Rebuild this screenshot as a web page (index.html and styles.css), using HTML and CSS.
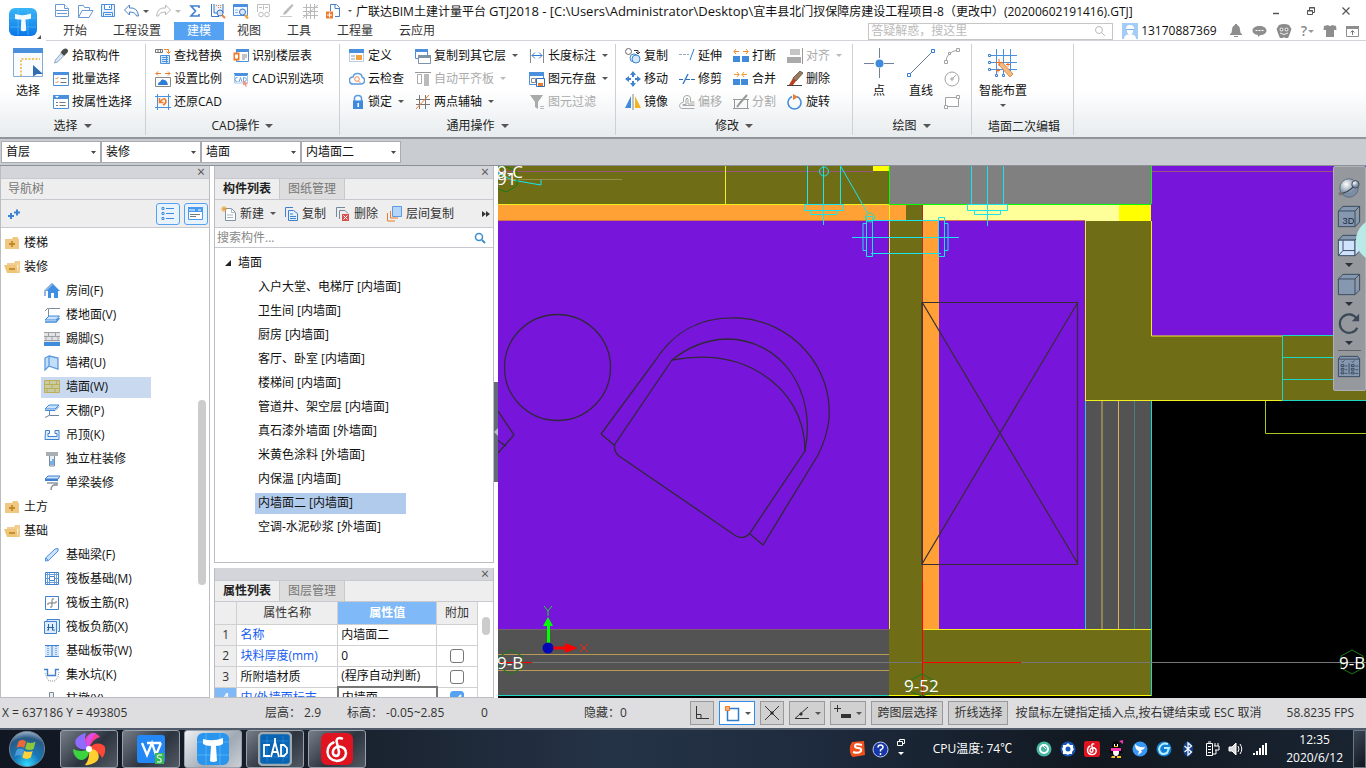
FILE: index.html
```html
<!DOCTYPE html>
<html lang="zh-CN">
<head>
<meta charset="utf-8">
<title>广联达BIM土建计量平台 GTJ2018</title>
<link rel="stylesheet" href="styles.css">
</head>
<body>
<div class="app">

<header class="top">
  <button class="logo" aria-label="应用菜单">
    <svg width="34" height="34" viewBox="0 0 34 34"><defs><linearGradient id="lg" x1="0" y1="0" x2="0" y2="1"><stop offset="0" stop-color="#38b6f7"/><stop offset="1" stop-color="#0a77e8"/></linearGradient></defs><rect x="1" y="2" width="28" height="28" rx="6" fill="url(#lg)"/><path d="M2 12h26M2 21h26M10 3v26M20 3v26" stroke="#5cc0fa" stroke-width=".6"/><path d="M7 8q8 2.500 16-.5v5q-2.500 1-5.500 1l.8 11q-3 1.500-5.500 0l.5-11Q10 13.500 7 13z" fill="#f3fbff"/><path d="M33 29v4h-4z" fill="#555"/></svg>
  </button>
  <div class="top-rows">
    <div class="titlebar">
      <div class="quick">
        <button aria-label="新建"><svg width="16" height="16" viewBox="0 0 16 16" fill="#fff" stroke="#6a9ad6"><path d="M1.500 7V1.500h9l4 4V7M1.500 7.500h13v6h-13z"/><path d="M10.500 1.500v4h4M3 10.500h10"/></svg></button>
        <button aria-label="打开"><svg width="17" height="16" viewBox="0 0 17 16" fill="#fff" stroke="#6a9ad6"><path d="M1.500 14.500v-12h5l1 2h5v3"/><path d="M1.500 14.500l3.500-7h11l-4 7z"/></svg></button>
        <button aria-label="保存"><svg width="16" height="16" viewBox="0 0 16 16" fill="#eaf3fd" stroke="#4a90dc"><path d="M1.500 1.500h13v12h-13zM4.500 1.500v5h7v-5M3.500 13.500v-4h9v4"/><path d="M5 11.500h6M9.500 3v2"/></svg></button>
        <button class="with-caret" aria-label="撤销"><svg width="17" height="16" viewBox="0 0 17 16" fill="#fff" stroke="#4a80c4"><path d="M1.500 7l5-5v3q8-1 9 8h-2q-1-4-7-4v3z"/></svg><i class="caret"></i></button>
        <button class="with-caret pale" aria-label="重做"><svg width="17" height="16" viewBox="0 0 17 16" fill="#fff" stroke="#b8b8b8"><path d="M15.500 7l-5-5v3q-8-1-9 8h2q1-4 7-4v3z"/></svg><i class="caret"></i></button>
        <button aria-label="汇总计算"><svg width="16" height="16" viewBox="0 0 16 16"><path d="M12 5V3H4l4.500 5L4 13h8v-2" fill="none" stroke="#3f7fd0" stroke-width="1.600"/></svg></button>
        <button aria-label="查看工程量"><svg width="17" height="17" viewBox="0 0 17 17"><path d="M1.500 1v12.500H9" fill="none" stroke="#3f74bf"/><path d="M4 1v9h9V1" fill="#eaf3fd" stroke="#3f74bf"/><path d="M6 2h1v1H6zM8 2h1v1H8zM10 2h1v1h-1zM8 4h1v1H8zM10 4h1v1h-1z" fill="#e8833a"/><circle cx="10" cy="10" r="3" fill="#cfe3fa" stroke="#3f74bf"/><path d="M12 12l3 3" stroke="#e8833a" stroke-width="2"/></svg></button>
        <button aria-label="查找"><svg width="17" height="17" viewBox="0 0 17 17"><path d="M.5 1.500h14v11H.5z" fill="#f4f9ff" stroke="#4a90dc"/><path d="M.5 1h14v3H.5z" fill="#4a90dc"/><path d="M2 7h3M2 9.500h3" stroke="#8cb8ea"/><circle cx="9.500" cy="9" r="3" fill="#d9e9fb" stroke="#3f74bf"/><path d="M12 12l3 3.500" stroke="#f0a030" stroke-width="2.200"/></svg></button>
        <button aria-label="检查"><svg width="16" height="16" viewBox="0 0 16 16" fill="none" stroke="#bdbdbd"><path d="M1.500 9V1.500h12V9M3 4.500h3M9 4.500h3M7.500 2.500v4" /><circle cx="5" cy="11.500" r="2.300"/><circle cx="11" cy="11.500" r="2.300"/></svg></button>
        <button aria-label="画笔"><svg width="16" height="16" viewBox="0 0 16 16"><path d="M13 1l1.500 1.500L7 11l-3 1 1-3z" fill="#bbb"/><path d="M1 13.500h12" stroke="#ccc"/></svg></button>
        <button aria-label="网格"><svg width="17" height="17" viewBox="0 0 17 17" stroke="#b9b9b9"><path d="M4.500 1v15M8.500 1v15M12.500 1v15M1 4.500h15M1 8.500h15M1 12.500h15M1 15L16 2"/></svg></button>
        <button aria-label="导入"><svg width="17" height="17" viewBox="0 0 17 17"><path d="M5.500 8V1.500h6l3 3v9H10M10 1.500v4h4" fill="#fff" stroke="#4a80c4"/><path d="M1 8.500h7v7H1z" fill="#ee7a2b"/><path d="M2 12h5M4.500 9.500v5" stroke="#fff"/></svg></button>
        <button class="tiny" aria-label="自定义快速访问工具栏"><i class="caret"></i></button>
      </div>
      <h1>广联达BIM土建计量平台 <span class="path">GTJ2018 - [C:\Users\Administrator\Desktop\</span>宜丰县北门扠保障房建设工程项目-8（更改中）(20200602191416).GTJ]</h1>
      <div class="window-buttons">
        <button aria-label="最小化"><svg width="10" height="10" viewBox="0 0 10 10"><path d="M2 7.500h6" stroke="#555" stroke-width="1.500"/></svg></button>
        <button aria-label="还原"><svg width="10" height="10" viewBox="0 0 10 10" fill="none" stroke="#555"><path d="M3.500 4V1.500h5v5H6M1.500 4.500h5v4h-5zM3 2h6M1 5h6"/></svg></button>
        <button aria-label="关闭"><svg width="10" height="10" viewBox="0 0 10 10"><path d="M1.500 1.500l7 7M8.500 1.500l-7 7" stroke="#555" stroke-width="1.200"/></svg></button>
      </div>
    </div>
    <div class="tabrow">
      <nav class="tabs">
        <button>开始</button><button>工程设置</button><button class="active">建模</button><button>视图</button><button>工具</button><button>工程量</button><button>云应用</button>
      </nav>
      <div class="account">
        <label class="help-search"><input type="text" placeholder="答疑解惑，搜这里" aria-label="答疑解惑"><svg width="12" height="12" viewBox="0 0 12 12" fill="none" stroke="#bbb"><circle cx="5" cy="5" r="3.500"/><path d="M7.500 7.500L11 11"/></svg></label>
        <a class="user" href="#"><svg width="16" height="16" viewBox="0 0 16 16"><path d="M0 0h16v16H0z" fill="#a4cdf6"/><path d="M2 16q0-4 4-4.500h4q4 .5 4 4.500z" fill="#fff"/><path d="M5 6h6v3q-1 3-3 3t-3-3zM4 6q0-4 4-4t4 4z" fill="#fff"/><path d="M4 6.500h8" stroke="#7fb4ea"/></svg>13170887369</a>
        <button aria-label="通知"><svg width="14" height="16" viewBox="0 0 14 16" fill="#8e8e8e"><path d="M6 1h2v1q3 1 3 5 0 3 2 4v1H1v-1q2-1 2-4 0-4 3-5zM5 13h4v1H5z"/></svg></button>
        <button aria-label="消息"><svg width="15" height="16" viewBox="0 0 15 16"><path d="M7.500 3c4 0 7 2 7 4.500S12 12 8.500 12L6 14v-2C2.500 11.800.5 10 .5 7.500S3.500 3 7.500 3z" fill="#8e8e8e"/><path d="M3.500 7h2v1h-2zM6.500 7h2v1h-2zM9.500 7h2v1h-2z" fill="#fff"/></svg></button>
        <button aria-label="助手"><svg width="16" height="16" viewBox="0 0 16 16"><path d="M3 2q5-2 10 0l2.500 4L13 13l-1 2H9l-1-1-1 1H4l-1-2L.5 6z" fill="#8b8b8b"/><circle cx="5.500" cy="6.500" r="2" fill="#ddd"/><circle cx="10.500" cy="6.500" r="2" fill="#ddd"/><circle cx="5.500" cy="6.500" r=".8" fill="#555"/><circle cx="10.500" cy="6.500" r=".8" fill="#555"/><path d="M4 10q4 3 8 0" stroke="#eee" fill="none"/></svg></button>
        <button class="question" aria-label="帮助">?<i class="caret"></i></button>
        <button aria-label="皮肤"><svg width="14" height="14" viewBox="0 0 14 14"><path d="M1 2l4-1q2 2 4 0l4 1 .5 4H11v7H3V6H.5z" fill="#8e8e8e"/></svg></button>
        <button aria-label="折叠功能区"><svg width="14" height="14" viewBox="0 0 14 14"><path d="M.5 2.500h12v10H.5z" fill="#fff" stroke="#8e8e8e"/><path d="M0 2h13v3H0z" fill="#8e8e8e"/><path d="M6.500 11V7M4.500 8.500l2-2 2 2" stroke="#777" fill="none"/></svg></button>
      </div>
    </div>
  </div>
</header>

<section class="ribbon" aria-label="建模">
  <div class="group g-select">
    <div class="group-body">
      <button class="big"><svg width="30" height="30" viewBox="0 0 30 30"><path d="M.5.5h29v28H.5z" fill="#f8fbff" stroke="#88abd4"/><path d="M0 0h30v5H0z" fill="#4a90dc"/><path d="M8 28V11h19" fill="none" stroke="#f0b428" stroke-width="1.500" stroke-dasharray="2 1.500"/><path d="M20 17l10 9h-6l-4 2.500z" fill="#316db4"/></svg>选择</button>
      <div class="col">
        <button><svg width="16" height="16" viewBox="0 0 16 16"><path d="M10 1.500q3-2 4.500 0t-1 4L11 8 7.500 4.500z" fill="#4a4a4a"/><path d="M8 5.500l2.500 2.500-6 6-3 1 1-3z" fill="#dbe8f5" stroke="#8ba6c0"/></svg>拾取构件</button>
        <button><svg width="16" height="16" viewBox="0 0 16 16"><path d="M.5 1.500h15v13H.5z" fill="#fff" stroke="#4a90dc"/><path d="M0 1h16v3H0z" fill="#4a90dc"/><path d="M2.500 7l1 1 2-2M2.500 11l1 1 2-2" fill="none" stroke="#f08a30"/><path d="M7.500 7.500h6M7.500 11.500h6" stroke="#777"/></svg>批量选择</button>
        <button><svg width="16" height="16" viewBox="0 0 16 16"><path d="M.5 1.500h15v13H.5z" fill="#fff" stroke="#4a90dc"/><path d="M0 1h16v4H0z" fill="#4a90dc"/><path d="M2 2h4L4 4z" fill="#fff"/><path d="M3 8.500h2M3 11.500h2M6.500 8.500h6M6.500 11.500h6" stroke="#777"/></svg>按属性选择</button>
      </div>
    </div>
    <button class="group-label">选择<i class="caret"></i></button>
  </div>
  <div class="group g-cad">
    <div class="group-body">
      <div class="col">
        <button><svg width="16" height="16" viewBox="0 0 16 16"><path d="M.5 1.500h7v3h-7zM3 1.500v3M5.500 1.500v3" fill="#fff" stroke="#777"/><path d="M9 1.500h4.500V5M11.500 3.500l2 2 2-2" fill="none" stroke="#f08a30"/><path d="M5.500 7.500h9v8h-9z" fill="#d8e9fb" stroke="#4a90dc"/><path d="M7 9.500h6M7 11.500h6M7 13.500h6M11.500 8v7" stroke="#4a90dc"/></svg>查找替换</button>
        <button><svg width="16" height="16" viewBox="0 0 16 16"><path d="M1 2.500h5M10 2.500h5M3 .5l-2 2 2 2M13 .5l2 2-2 2" fill="none" stroke="#ee7a2b"/><path d="M.5 6.500h15v9H.5z" fill="#fff" stroke="#888"/><path d="M3 14q0-3 2-3 2-4 4-2 3 0 4 5z" fill="#2f7dd2"/></svg>设置比例</button>
        <button><svg width="16" height="16" viewBox="0 0 16 16" fill="none"><path d="M0 2.500h16M0 13.500h16M2.500 0v16M13.500 0v16" stroke="#4a90dc"/><path d="M5 8q5-6 6-1 0 3-3 4M4.500 4v4.500h4" stroke="#ee7a2b" stroke-width="1.600"/></svg>还原CAD</button>
      </div>
      <div class="col">
        <button><svg width="16" height="16" viewBox="0 0 16 16"><path d="M3.500 1.500h12v12h-12z" fill="#fff" stroke="#4a90dc"/><path d="M3 1h13v3H3z" fill="#4a90dc"/><path d="M9 7h5M9 9h5M9 11h3" stroke="#888"/><path d="M.5 4.500h6v8h-6z" fill="#ee7a2b"/><path d="M2 6.500h3v4H2z" fill="#fff"/></svg>识别楼层表</button>
        <button><svg width="16" height="16" viewBox="0 0 16 16"><path d="M1 2h14v3H1z" fill="#4a90dc"/><path d="M1.500 3v9h13V4" fill="none" stroke="#a8cbee"/><path d="M4.500 6.500Q2 6 2 8.500t2.500 2M6 11l1.500-4.500L9 11M10.500 6.500v4q3 0 3-2t-3-2" fill="none" stroke="#6da4dd"/><path d="M10 9l5 4-2 .5 1 2h-1.500l-1-2-1.500 1z" fill="#ee957f"/></svg>CAD识别选项</button>
      </div>
    </div>
    <button class="group-label">CAD操作<i class="caret"></i></button>
  </div>
  <div class="group g-common">
    <div class="group-body">
      <div class="col">
        <button><svg width="16" height="16" viewBox="0 0 16 16"><path d="M.5 1.500h14v12H.5z" fill="#fff" stroke="#b9cde4"/><path d="M0 1h15v4H0z" fill="#4a90dc"/><path d="M2 7h4v2H2zM2 10h4v2H2z" fill="#c3ccd7"/><path d="M7 7h6v5H7z" fill="#f4a03c"/></svg>定义</button>
        <button><svg width="16" height="16" viewBox="0 0 16 16" fill="none"><path d="M4 13Q.5 13 .5 9.500T4 6q1-4 5-3.500T13 6q3 1 2.500 4T12 13z" stroke="#5b9be0" stroke-width="1.400"/><circle cx="8" cy="8" r="2.300" stroke="#ee8a4b"/><path d="M9.500 10l2 2" stroke="#ee8a4b"/></svg>云检查</button>
        <button><svg width="16" height="16" viewBox="0 0 16 16"><path d="M5.500 7V4.500q0-3 3.500-3t3.500 3V7" fill="none" stroke="#5b9be0" stroke-width="1.600"/><path d="M4 6.500h10V15H4z" fill="#3f8adb"/><path d="M8.500 9h1.500v4H8.500z" fill="#fff"/></svg>锁定<i class="caret"></i></button>
      </div>
      <div class="col">
        <button><svg width="16" height="16" viewBox="0 0 16 16"><path d="M.5 1.500h12v9H.5z" fill="#fff" stroke="#4a90dc"/><path d="M0 1h13v3H0z" fill="#4a90dc"/><path d="M3.500 7.500h12v8h-12z" fill="#fff" stroke="#7f93a6"/><path d="M3 7h13v3H3z" fill="#7f93a6"/></svg>复制到其它层<i class="caret"></i></button>
        <button disabled><svg width="16" height="16" viewBox="0 0 16 16"><path d="M0 1.500h16" stroke="#999"/><path d="M2.500 3.500h4v9h-4z" fill="#fff" stroke="#aaa"/><path d="M9 3h5v12H9z" fill="#bbb"/></svg>自动平齐板<i class="caret"></i></button>
        <button><svg width="16" height="16" viewBox="0 0 16 16"><path d="M4.500 1v14M10.500 1v14M1 5.500h14M1 10.500h14" stroke="#777"/><path d="M1 15L14 1" stroke="#ee7a2b"/></svg>两点辅轴<i class="caret"></i></button>
      </div>
      <div class="col">
        <button><svg width="16" height="16" viewBox="0 0 16 16"><path d="M1.500 1v14M14.500 1v14" stroke="#888"/><path d="M3 7.500h10M6 4.500l-3 3 3 3M10 4.500l3 3-3 3" fill="none" stroke="#2f7dd2"/></svg>长度标注<i class="caret"></i></button>
        <button><svg width="16" height="16" viewBox="0 0 16 16"><path d="M.5 1.500h14v12H.5z" fill="#fff" stroke="#4a90dc"/><path d="M0 1h15v4H0z" fill="#4a90dc"/><path d="M2.500 7.500h4v4h-4z" fill="none" stroke="#888"/><path d="M7.500 7.500h8v8h-8z" fill="#fff" stroke="#2f6cb2"/><path d="M9 12h5v3H9z" fill="#ee7a2b"/></svg>图元存盘<i class="caret"></i></button>
        <button disabled><svg width="16" height="16" viewBox="0 0 16 16"><path d="M1 1h13L9 8v7l-3-2V8z" fill="#aaa"/><path d="M11 12.500h4M11 14.500h4" stroke="#bbb"/></svg>图元过滤</button>
      </div>
    </div>
    <button class="group-label">通用操作<i class="caret"></i></button>
  </div>
  <div class="group g-modify">
    <div class="group-body">
      <div class="col">
        <button><svg width="16" height="16" viewBox="0 0 16 16" fill="none"><circle cx="3.500" cy="3.500" r="3" stroke="#666"/><path d="M9 2.500h4v3M11 4l2 2 2-2" stroke="#333"/><circle cx="9" cy="10" r="4" fill="#fff" stroke="#3b86cf"/><circle cx="11" cy="11" r="4" fill="#d5e8fb" stroke="#3b86cf"/></svg>复制</button>
        <button><svg width="16" height="16" viewBox="0 0 16 16" fill="#3f80cf"><path d="M8 0l3 4H9v2H7V4H5zM8 16l3-4H9v-2H7v2H5zM0 8l4-3v2h2v2H4v2zM16 8l-4-3v2h-2v2h2v2z"/></svg>移动</button>
        <button><svg width="16" height="16" viewBox="0 0 16 16"><path d="M6 2v12H0z" fill="#3f8adb"/><path d="M10 2v12h6z" fill="#f5b31d"/><path d="M8 0v16" stroke="#888"/></svg>镜像</button>
      </div>
      <div class="col">
        <button><svg width="16" height="16" viewBox="0 0 16 16"><path d="M0 6.500h10" stroke="#9aa9ba" stroke-dasharray="3 1"/><path d="M15 1l-4 11" stroke="#2f7dd2"/></svg>延伸</button>
        <button><svg width="16" height="16" viewBox="0 0 16 16"><path d="M0 8.500h4M7 8.500h9" stroke="#2f6cb2" stroke-dasharray="4 1"/><path d="M9 3L4 13" stroke="#2f7dd2" stroke-width="1.400"/></svg>修剪</button>
        <button disabled><svg width="16" height="16" viewBox="0 0 16 16" fill="none" stroke="#aaa"><path d="M15.500 14.500H2.500Q.5 14 .5 11.500T4.500 8V4Q5 1.500 8 1.500T11.500 4v4h4M15.500 11.500H4q-1-1 1-1h2V5q1-2 2 0v5h6.500"/></svg>偏移</button>
      </div>
      <div class="col">
        <button><svg width="16" height="16" viewBox="0 0 16 16"><path d="M0 8h7v6H0zM9 8h7v6H9z" fill="#3f8adb"/><path d="M1 3.500h5M10 3.500h5M3 1L1 3.500 3 6M13 1l2 2.500L13 6" stroke="#ee8a2b" fill="none"/></svg>打断</button>
        <button><svg width="16" height="16" viewBox="0 0 16 16"><path d="M0 8h7v6H0zM8 8h7v6H8z" fill="#3f8adb"/><path d="M1 3.500h5M9 3.500h5M4 1l2 2.500L4 6M11 1L9 3.500 11 6" stroke="#f09a30" fill="none"/></svg>合并</button>
        <button disabled><svg width="16" height="16" viewBox="0 0 16 16" fill="none" stroke="#999"><path d="M1.500 5.500h13v9h-13zM0 5.500h16M0 14.500h16"/><path d="M14 1L7 9l-3 4" stroke-width="2"/></svg>分割</button>
      </div>
      <div class="col">
        <button disabled><svg width="16" height="16" viewBox="0 0 16 16"><path d="M3 1h10v6H3z" fill="#c5c5c5"/><path d="M0 9h14v6H0z" fill="#aaa"/><path d="M15.500 0v16" stroke="#999"/></svg>对齐<i class="caret"></i></button>
        <button><svg width="16" height="16" viewBox="0 0 16 16"><path d="M13 0l3 2-7 8-3-3z" fill="#9b7b5c" stroke="#444" stroke-width=".7"/><path d="M6 7l3 3-3 4H2z" fill="#ba401d"/><path d="M0 14.500h15" stroke="#444"/></svg>删除</button>
        <button><svg width="16" height="16" viewBox="0 0 16 16"><path d="M10 2.500A6.500 6.500 0 1 1 5 2.500" fill="none" stroke="#3f8adb" stroke-width="1.500"/><path d="M6 0l5 3-5 3z" fill="#ee7a2b"/></svg>旋转</button>
      </div>
    </div>
    <button class="group-label">修改<i class="caret"></i></button>
  </div>
  <div class="group g-draw">
    <div class="group-body">
      <button class="big"><svg width="30" height="30" viewBox="0 0 30 30"><path d="M15.500 0v10M15.500 20v10M0 15.500h10M20 15.500h10" stroke="#718298"/><circle cx="15.500" cy="15.500" r="4" fill="#3f8adb"/></svg>点</button>
      <button class="big"><svg width="30" height="30" viewBox="0 0 30 30"><path d="M3 27L27 3" stroke="#667686"/><path d="M1.500 25.500h3v3h-3zM25.500 1.500h3v3h-3z" fill="#fff" stroke="#2f7dd2"/></svg>直线</button>
      <div class="col icon-only">
        <button aria-label="弧线"><svg width="16" height="16" viewBox="0 0 16 16" fill="#fff" stroke="#a2a2a2"><path d="M2 14Q2 4 14 2" fill="none"/><path d="M.5 12.500h3v3h-3zM4.500 4.500h2v2h-2zM12.500.5h3v3h-3z"/></svg></button>
        <button aria-label="圆"><svg width="16" height="16" viewBox="0 0 16 16" fill="none" stroke="#a2a2a2"><circle cx="8" cy="8" r="7"/><path d="M7 7h2v2H7zM9 7l3-3"/></svg></button>
        <button aria-label="矩形"><svg width="16" height="16" viewBox="0 0 16 16" fill="#fff" stroke="#a2a2a2"><path d="M1.500 3.500h13v9h-13z"/><path d="M.5 11.500h3v3h-3zM12.500 1.500h3v3h-3z"/></svg></button>
      </div>
    </div>
    <button class="group-label">绘图<i class="caret"></i></button>
  </div>
  <div class="group g-second">
    <div class="group-body">
      <button class="big"><svg width="30" height="30" viewBox="0 0 30 30"><path d="M8.500 1v27M15.500 1v27M22.500 1v22M2 7.500h27M2 14.500h27M2 21.500h27" stroke="#4a90dc"/><path d="M.5 6.500h2v2h-2zM.5 13.500h2v2h-2zM.5 20.500h2v2h-2zM7.500 26.500h2v2h-2zM14.500 26.500h2v2h-2z" fill="#fff" stroke="#3f80cf"/><path d="M12 15l2-1 11 12-3 3-11-12z" fill="#f4b984" stroke="#d3772c" stroke-width=".8"/><path d="M11 11v7M7.500 14.500h7M18 16.500h4M20 14.500v4M8 22.500h4M10 20.500v4" stroke="#f06c22"/></svg>智能布置<i class="caret"></i></button>
    </div>
    <div class="group-label">墙面二次编辑</div>
  </div>
</section>

<div class="context-bar">
  <select aria-label="楼层"><option>首层</option></select>
  <select aria-label="构件大类"><option>装修</option></select>
  <select aria-label="构件类型"><option>墙面</option></select>
  <select aria-label="构件"><option>内墙面二</option></select>
</div>

<main class="workspace">
  <aside class="panel nav">
    <div class="panel-grip"><button aria-label="关闭导航树">×</button></div>
    <h2>导航树</h2>
    <div class="nav-tools">
      <button class="expand" aria-label="展开全部"><svg width="14" height="12" viewBox="0 0 14 12"><path d="M0 8h6M3 5v6M6 4.500h6M9 1.500v6" stroke="#3b82d4" stroke-width="2"/></svg></button>
      <button class="toggle" aria-label="列表视图"><svg width="14" height="15" viewBox="0 0 14 15" fill="none" stroke="#3f8adb"><path d="M1 1.500h2v2H1zM1 6.500h2v2H1zM1 11.500h2v2H1zM5 2.500h8M5 7.500h8M5 12.500h8"/></svg></button>
      <button class="toggle" aria-label="窗口视图"><svg width="16" height="14" viewBox="0 0 16 14"><path d="M.5.5h14v12H.5z" fill="#fff" stroke="#4a9af0"/><path d="M0 0h15v5H0z" fill="#4a9af0"/><path d="M2 2v2M4 2v2M6 2v2M10 3h3" stroke="#fff"/><path d="M2 7.500h10M2 9.500h6" stroke="#777"/></svg></button>
    </div>
    <div class="nav-tree">
      <ul>
        <li><button class="folder"><svg width="16" height="14" viewBox="0 0 16 14"><path d="M1 3h7l1-2h5v2h1v10H1z" fill="#efc983"/><path d="M5 8h6M8 5v6" stroke="#c48a26" stroke-width="1.800"/></svg>楼梯</button></li>
        <li><button class="folder"><svg width="16" height="14" viewBox="0 0 16 14"><path d="M3 3h7l1-2h5v12h-2V5H3z" fill="#f2cf91"/><path d="M0 5h13l1 8H3z" fill="#efc578"/><path d="M5 9h6" stroke="#b98425" stroke-width="1.600"/></svg>装修</button></li>
        <li><button class="leaf"><svg width="16" height="16" viewBox="0 0 16 16"><path d="M0 8l8-8 8 8h-2v7h-4v-5H7v5H4V8z" fill="#3f8fe4"/><path d="M1 8l7-7M1 13V8" stroke="#8fb7df" stroke-width="2"/></svg><span>房间(F)</span></button></li>
        <li><button class="leaf"><svg width="16" height="16" viewBox="0 0 16 16"><path d="M4.500 9V1.500H16M1 4l3-3" fill="none" stroke="#7d8c9c"/><path d="M1 13l4-4h10.500L12 13z" fill="#cce2fa" stroke="#3f8adb"/><path d="M1 15h11l3.500-4" fill="none" stroke="#3f8adb" stroke-width="1.500"/></svg><span>楼地面(V)</span></button></li>
        <li><button class="leaf"><svg width="16" height="16" viewBox="0 0 16 16"><path d="M0 1h16v10H0z" fill="#e1e2e3"/><path d="M0 1.500h16M0 5.500h16M0 9.500h16M4.500 2v3M11.500 2v3M8 6v3M2 6v3M14 6v3" stroke="#9da1a6"/><path d="M0 11h16v4H0z" fill="#3f8adb"/></svg><span>踢脚(S)</span></button></li>
        <li><button class="leaf"><svg width="16" height="16" viewBox="0 0 16 16"><path d="M1 3l4-2v10l-4 4zM5 1l9 2v11l-9-3z" fill="#c4def9" stroke="#5b9be0" stroke-width="1.300"/></svg><span>墙裙(U)</span></button></li>
        <li><button class="leaf selected"><svg width="16" height="14" viewBox="0 0 16 14"><path d="M.5.5h15v12H.5zM0 4.500h16M0 8.500h16M5.500 1v3M12.500 1v3M8 5v3M3 9v3M11 9v3" fill="#c8cba4" stroke="#bcae55"/></svg><span>墙面(W)</span></button></li>
        <li><button class="leaf"><svg width="16" height="16" viewBox="0 0 16 16"><path d="M1 6l4-4h10l-4 4z" fill="#cce2fa" stroke="#3f8adb"/><path d="M1 7.500h10l4-4" fill="none" stroke="#3f8adb"/><path d="M5.500 8v4.500H15M1 14.500l4-2" fill="none" stroke="#6f859a"/></svg><span>天棚(P)</span></button></li>
        <li><button class="leaf"><svg width="16" height="14" viewBox="0 0 16 14"><path d="M1.500 2.500h4v3H4v3h9v-3h-2v-3h4v9h-14z" fill="#dcecfc" stroke="#3f80cf"/></svg><span>吊顶(K)</span></button></li>
        <li><button class="leaf"><svg width="16" height="16" viewBox="0 0 16 16"><path d="M2 1h12v4H2z" fill="#a9b0b5"/><path d="M5.500 5v10h5V5" fill="#e4effa" stroke="#7e8c98"/><path d="M6 10h2v-2h2v6H6z" fill="#7ab0e8"/></svg><span>独立柱装修</span></button></li>
        <li><button class="leaf"><svg width="16" height="16" viewBox="0 0 16 16"><path d="M1 4l3-3h12l-2 3z" fill="#cce2fa" stroke="#3f80cf"/><path d="M1 5h13" stroke="#3f80cf" stroke-width="2"/><path d="M3 8h10v2q-6-1-6 5" fill="none" stroke="#8d979f" stroke-width="1.600"/></svg><span>单梁装修</span></button></li>
        <li><button class="folder"><svg width="16" height="14" viewBox="0 0 16 14"><path d="M1 3h7l1-2h5v2h1v10H1z" fill="#efc983"/><path d="M5 8h6M8 5v6" stroke="#c48a26" stroke-width="1.800"/></svg>土方</button></li>
        <li><button class="folder"><svg width="16" height="14" viewBox="0 0 16 14"><path d="M3 3h7l1-2h5v12h-2V5H3z" fill="#f2cf91"/><path d="M0 5h13l1 8H3z" fill="#efc578"/><path d="M5 9h6" stroke="#b98425" stroke-width="1.600"/></svg>基础</button></li>
        <li><button class="leaf"><svg width="16" height="16" viewBox="0 0 16 16"><path d="M1.500 14v-3L11 2l3-.5V4l-9.500 9.500zM2 11l2.500 2.500" fill="#cce2fa" stroke="#4a90dc"/></svg><span>基础梁(F)</span></button></li>
        <li><button class="leaf"><svg width="16" height="16" viewBox="0 0 16 16"><path d="M1.500 1.500h13v12h-13zM5.500 5.500h5v4h-5z" fill="#fff" stroke="#3f80cf"/><path d="M3.500 2v11M12.500 2v11M2 3.500h12M2 11.500h12M5.500 2v3M10.500 2v3M5.500 10v3M10.500 10v3M2 7.500h3M11 7.500h3" stroke="#6ba0de"/></svg><span>筏板基础(M)</span></button></li>
        <li><button class="leaf"><svg width="16" height="16" viewBox="0 0 16 16"><path d="M1.500 1.500h13v13h-13z" fill="#fff" stroke="#3f80cf"/><path d="M10 4q-2-1-2 1v6q0 2-2 1M4 10q-1-2 1-2h6q2 0 1-2" stroke="#777" fill="none"/></svg><span>筏板主筋(R)</span></button></li>
        <li><button class="leaf"><svg width="16" height="16" viewBox="0 0 16 16"><path d="M3 2V.500h12.500v12H14M.5 2.500h12v12H.5z" fill="#dcecfc" stroke="#3f80cf"/><path d="M4.500 5v6M8.500 5v6M3 8.500h7M3 11h2M8 11h3" stroke="#2864ab"/></svg><span>筏板负筋(X)</span></button></li>
        <li><button class="leaf"><svg width="16" height="14" viewBox="0 0 16 14"><path d="M1 1h14v11H1z" fill="#d6e8fb"/><path d="M1 1.500h14M1 12.500h14M8 1v11" stroke="#3f80cf"/><path d="M4 2v10M12 2v10" stroke="#3f80cf" stroke-dasharray="1 1"/></svg><span>基础板带(W)</span></button></li>
        <li><button class="leaf"><svg width="16" height="16" viewBox="0 0 16 16"><path d="M0 2.500h3.500v6h8v-6H15" fill="none" stroke="#3f80cf" stroke-width="1.400"/><path d="M1 6l2 5 2 3h6l3-4 1-5" fill="none" stroke="#8995a0" stroke-dasharray="1 1"/></svg><span>集水坑(K)</span></button></li>
        <li><button class="leaf"><svg width="16" height="16" viewBox="0 0 16 16"><path d="M5.500 1.500h4v9h4v4h-12v-4h4z" fill="#eee" stroke="#7e8c98"/></svg><span>柱墩(Y)</span></button></li>
      </ul>
      <div class="scroll-thumb"></div>
    </div>
  </aside>

  <div class="middle">
    <section class="panel components">
      <div class="panel-grip"><button aria-label="关闭构件列表">×</button></div>
      <div class="panel-tabs"><button class="active">构件列表</button><button>图纸管理</button></div>
      <div class="component-tools">
        <button><svg width="16" height="16" viewBox="0 0 16 16"><path d="M4.500 2.500h6l4 4v8h-10z" fill="#fff" stroke="#7f93a6"/><path d="M10.500 2.500v4h4M6 9h6M6 11.500h6" fill="none" stroke="#aab6c2"/><path d="M3 0v6M0 3h6M1 1l4 4M5 1L1 5" stroke="#f0a030"/></svg>新建<i class="caret"></i></button>
        <button><svg width="14" height="16" viewBox="0 0 14 16"><path d="M.5 11V1.500H8" fill="none" stroke="#3f80cf"/><path d="M3.500 4.500h5l4 3v7h-9z" fill="#e4effb" stroke="#3f80cf"/><path d="M5 8h3M5 10.500h6M5 12.500h6" stroke="#3f80cf"/></svg>复制</button>
        <button><svg width="16" height="16" viewBox="0 0 16 16"><path d="M1.500 11V1.500H10M4.500 13V4.500H10l3 3" fill="none" stroke="#76899b"/><path d="M7 8h7v7H7z" fill="#d84d4b"/><path d="M8.500 9.500l4 4M12.500 9.500l-4 4" stroke="#fff"/></svg>删除</button>
        <button><svg width="16" height="16" viewBox="0 0 16 16"><path d="M.5 7v8H8M3.500 5v7H11" fill="none" stroke="#ee7a2b"/><path d="M5.500.500h9v10h-9z" fill="#b4d5f8" stroke="#5b9be0"/></svg>层间复制</button>
        <button class="more" aria-label="更多"><svg width="8" height="6" viewBox="0 0 8 6" fill="#333"><path d="M0 0l4 3-4 3zM4 0l4 3-4 3z"/></svg></button>
      </div>
      <label class="component-search"><input type="text" placeholder="搜索构件..." aria-label="搜索构件"><svg width="12" height="12" viewBox="0 0 12 12" fill="none" stroke="#3b8ecb" stroke-width="1.500"><circle cx="5" cy="5" r="3.500"/><path d="M8 8l3 3" stroke-width="2"/></svg></label>
      <div class="component-tree">
        <button class="root"><svg width="7" height="7" viewBox="0 0 7 7"><path d="M6 0v6H0z" fill="#222"/></svg>墙面</button>
        <ul>
          <li><button>入户大堂、电梯厅 [内墙面]</button></li>
          <li><button>卫生间 [内墙面]</button></li>
          <li><button>厨房 [内墙面]</button></li>
          <li><button>客厅、卧室 [内墙面]</button></li>
          <li><button>楼梯间 [内墙面]</button></li>
          <li><button>管道井、架空层 [内墙面]</button></li>
          <li><button>真石漆外墙面 [外墙面]</button></li>
          <li><button>米黄色涂料 [外墙面]</button></li>
          <li><button>内保温 [内墙面]</button></li>
          <li><button class="selected">内墙面二 [内墙面]</button></li>
          <li><button>空调-水泥砂浆 [外墙面]</button></li>
        </ul>
      </div>
    </section>
    <section class="panel properties">
      <div class="panel-grip"><button aria-label="关闭属性列表">×</button></div>
      <div class="panel-tabs"><button class="active">属性列表</button><button>图层管理</button></div>
      <div class="table-area">
        <table>
          <colgroup><col class="c-num"><col class="c-name"><col class="c-value"><col class="c-extra"></colgroup>
          <thead><tr><th></th><th>属性名称</th><th class="current">属性值</th><th>附加</th></tr></thead>
          <tbody>
            <tr><th>1</th><td class="link">名称</td><td>内墙面二</td><td></td></tr>
            <tr><th>2</th><td class="link">块料厚度(mm)</td><td>0</td><td class="check"><input type="checkbox" aria-label="附加 块料厚度"></td></tr>
            <tr><th>3</th><td>所附墙材质</td><td>(程序自动判断)</td><td class="check"><input type="checkbox" aria-label="附加 所附墙材质"></td></tr>
            <tr><th class="current">4</th><td class="link">内/外墙面标志</td><td class="editing">内墙面</td><td class="check"><input type="checkbox" checked aria-label="附加 内/外墙面标志"></td></tr>
          </tbody>
        </table>
        <div class="scroll-gutter"><div class="scroll-thumb"></div></div>
      </div>
    </section>
  </div>

  <div class="splitter"><button aria-label="折叠面板"><svg width="4" height="8" viewBox="0 0 4 8"><path d="M4 0v8L0 4z" fill="#b7bcc4"/></svg></button></div>

  <section class="canvas" aria-label="绘图区">
    <svg class="drawing" viewBox="498 166 868 532" preserveAspectRatio="xMinYMin slice">
      <path d="M498 166h868v532H498z" fill="#000"/>
      <path d="M498 221h588v408H498zM1151 166h215v170h-215z" fill="#7716da"/>
      <g fill="#6f6e16"><path d="M498 166h391v39H498zM906 205h17v16h-17zM889 221h34v475h-34zM923 629h228v67H923zM1086 221h65v180h-65zM1151 336h215v65h-215z"/></g>
      <path d="M889 166h262v38H889z" fill="#808080"/>
      <path d="M498 205h408v16H498zM923 221h16v408h-16z" fill="#ffa135"/>
      <path d="M923 205h196v16H923z" fill="#ffff99"/>
      <path d="M1119 205h32v16h-32zM873 166h16v5h-16z" fill="#ff0"/>
      <path d="M1086 401h65v228h-65zM498 629h391v67H498z" fill="#535353"/>
      <g fill="none" stroke-width="1">
        <path d="M498 171.500h375M1151 171.500h182" stroke="#99577e"/>
        <path d="M889 204.500h262M889.500 166v38M1151.500 166v38" stroke="#0f0"/>
        <path d="M498 204.500h391M889.500 205v424M1085.500 221v180M1151.500 221v115h131M1086 400.500h196M923 629.500h228M725.500 166v38" stroke="#f1ee20"/>
        <path d="M498 220.500h391M939 220.500h146" stroke="#d0704c"/>
        <path d="M889 695.500h262" stroke="#ff0"/>
        <path d="M498 695.500h391M1151.500 401v295M1085.500 401v228M1282.500 336v65M1282 335.500h84M1282 357.500h84M1282 379.500h84M1282 400.500h84" stroke="#1dd6c4"/>
        <path d="M1102 401v228" stroke="#948155" stroke-width="2"/><path d="M1118.500 401v228" stroke="#d8b460"/><path d="M1134.500 401v228" stroke="#4d7c7c"/>
        <path d="M1366 433.500h-100.500V401" stroke="#a9c61c"/>
        <path d="M498 654.500h391M498 670.500h391" stroke="#bc9855"/>
        <path d="M498 629.500h391" stroke="#7b5e72"/>
        <path d="M498 662.500h868" stroke="#777"/>
        <path d="M922.500 205v377" stroke="#a43035"/>
        <path d="M922.500 582v114M922 662.500h99M498 662.500h34" stroke="#f00"/>
        <g stroke="#31283b" stroke-width="1.300">
          <circle cx="557.500" cy="367.500" r="53"/>
          <path d="M601 434l54-73C676 328 704 316 739 318c52 3 94 48 90 101q-2 18-11 36l-55 90-13-11M601 434l13 11"/>
          <path d="M672 360l-57 84q-2 7 4 12l117 80q8 4 14-3l55-82c12-60-23-112-79-112q-29 1-54 21z"/>
          <path d="M672 360q50-9 85 11c32 18 48 47 48 80M498 411l16 24-16 18M506 446q-8-5-8-6"/>
        </g>
        <path d="M922 302.500h155.500v262H922zM922 302l156 262M1078 302L922 564" stroke="#362d34" stroke-width="1.200"/>
        <path d="M807.500 166v38M840.500 166v38M823.500 166v59M971.500 166v38M987.500 166v60M1003.500 166v38M804.500 204.500h39v6h-39zM810.500 210.500v4h26v-4M967.500 204.500h40v6h-40zM974.500 210.500v4h26v-4M866 220.500h72M871 253.500h70M852 237.500h107M866.500 216.500h6v40h-6zM938.500 217.500h6v39h-6zM866 223.500h-3v27h3M945 223.500h3v27h-3M840.500 166l27 47M498 173l14 7 29 5v-6" stroke="#18e5ed"/>
        <circle cx="824" cy="171.500" r="4.500" stroke="#18e5ed"/><circle cx="870" cy="217.500" r="4.500" stroke="#20ddb5"/>
        <path d="M498 179.500h124" stroke="#988e4a"/>
        <g stroke="#197819"><path d="M500 656l11-6 11 6v12l-11 6-11-6zM911 680l11-6 11 6v12l-11 4-11-4zM1341 656l11-6 11 6v12l-11 6-11-6zM498 168l9-1 10 5v13l-10 7-9-3"/></g>
      </g>
      <g class="axis-label"><text x="497" y="178">9-C</text><text x="497" y="185">91</text><text x="497" y="669">9-B</text><text x="904" y="692">9-52</text><text x="1339" y="669">9-B</text></g>
      <path d="M547 626v18h3v-18h3l-5-9-5 9z" fill="#0f0"/><path d="M553 646.500h12V643l13 5-13 5v-3.500h-12z" fill="#f00"/><circle cx="548" cy="648" r="5.500" fill="#0308b5"/>
      <path d="M544 606l4 5 4-5M548 611v5" fill="none" stroke="#15df18"/><path d="M580 644l8 8M588 644l-8 8" stroke="#ff2010"/>
    </svg>
    <div class="view-tools">
      <button aria-label="动态观察"><svg width="24" height="24" viewBox="0 0 26 24"><defs><radialGradient id="ball" cx=".35" cy=".3"><stop stop-color="#fff"/><stop offset="1" stop-color="#7b8da4"/></radialGradient></defs><circle cx="13" cy="12" r="10" fill="url(#ball)" stroke="#5b6878"/><path d="M2 18q10 0 18-10" fill="none" stroke="#3d4a59" stroke-width="1.500"/><circle cx="20" cy="8" r="4" fill="url(#ball)" stroke="#3d4a59"/><circle cx="4" cy="18" r="2" fill="#777"/></svg></button>
      <button aria-label="三维"><svg width="24" height="25" viewBox="0 0 26 25" fill="#8598b0" stroke="#34455a"><path d="M1.500 6.500h18v17h-18zM1.500 6.500l5-5h18l-5 5M19.500 23.500l5-5v-17"/><text class="cube-label" x="6" y="21">3D</text></svg></button>
      <button aria-label="俯视"><svg width="24" height="25" viewBox="0 0 26 25" fill="#cfe3ff" stroke="#34455a"><path d="M1.500 6.500h18v17h-18z"/><path d="M1.500 6.500l5-5h18l-5 5z" fill="#8598b0"/><path d="M19.500 23.500l5-5v-17l-5 5z"/><path d="M6.500 7v11h13M2 23l4.500-5" fill="none"/></svg></button>
      <i class="caret"></i>
      <button aria-label="显示模式"><svg width="24" height="25" viewBox="0 0 26 25" fill="#8598b0" stroke="#34455a"><path d="M1.500 6.500h18v17h-18zM1.500 6.500l5-5h18l-5 5M19.500 23.500l5-5v-17"/></svg></button>
      <i class="caret"></i>
      <button aria-label="旋转视图"><svg width="24" height="25" viewBox="0 0 26 25"><path d="M21 6.500A10 10 0 1 0 22 17" fill="none" stroke="#3a4857" stroke-width="2.300"/><path d="M24 2v8h-8z" fill="#3a4857"/></svg></button>
      <i class="caret"></i>
      <hr>
      <button aria-label="显示设置"><svg width="24" height="25" viewBox="0 0 26 25" fill="#8598b0" stroke="#34455a"><path d="M1.500 4.500l2-3h19l2 3v19h-23zM1.500 4.500h23M13 9v12"/><path d="M4.500 10.500h3v2h-3zM4.500 14.500h3v2h-3zM4.500 18.500h3v2h-3zM15.500 10.500h3v2h-3zM15.500 14.500h3v2h-3zM15.500 18.500h3v2h-3zM9 12h2M9 16h2M9 20h2M20 12h3M20 16h3M20 20h3M5 7l1 1 2-2M16 7l1 1 2-2"/></svg></button>
    </div>
    <div class="bubble"></div>
  </section>
</main>

<footer class="status">
  <span class="coords">X = 637186 Y = 493805</span>
  <span class="floor">层高： 2.9</span>
  <span class="level">标高： -0.05~2.85</span>
  <span class="zero">0</span>
  <span>隐藏：0</span>
  <div class="status-right">
    <button aria-label="正交"><svg width="16" height="16" viewBox="0 0 16 16" fill="none" stroke="#333"><path d="M2.500 1v12.500H15M3 9.500h4v4"/></svg></button>
    <button class="on" aria-label="捕捉"><svg width="18" height="18" viewBox="0 0 18 18"><path d="M4.500 4.500h11v12h-11z" fill="#fff" stroke="#2f7dd2" stroke-width="1.500"/><path d="M2.500 2.500h4v4h-4z" fill="#f6b07a" stroke="#ee7a2b"/></svg><i class="caret"></i></button>
    <button aria-label="交点"><svg width="16" height="16" viewBox="0 0 16 16" stroke="#333"><path d="M1 1l14 14M15 1L1 15"/><path d="M7 7h2v2H7z"/></svg></button>
    <button aria-label="角度"><svg width="18" height="16" viewBox="0 0 18 16" fill="none" stroke="#333"><path d="M15 2L2 13.500h14"/><path d="M7 8h2v2H7z" fill="#333"/></svg><i class="caret"></i></button>
    <button aria-label="动态输入"><svg width="18" height="16" viewBox="0 0 18 16"><path d="M3.500 0v7M0 3.500h7" stroke="#333"/><path d="M7 9h10v4H7z" fill="#333"/></svg><i class="caret"></i></button>
    <button class="text">跨图层选择</button>
    <button class="text">折线选择</button>
    <span class="hint">按鼠标左键指定插入点,按右键结束或 ESC 取消</span>
    <span class="fps">58.8235 FPS</span>
  </div>
</footer>

<div class="taskbar">
  <button class="start" aria-label="开始菜单"><svg width="42" height="38" viewBox="0 0 42 40"><defs><radialGradient id="orb" cx=".5" cy=".95" r=".95"><stop stop-color="#31dcff"/><stop offset=".4" stop-color="#1878b8"/><stop offset=".8" stop-color="#2a5a86"/><stop offset="1" stop-color="#9fb5c8"/></radialGradient></defs><circle cx="21" cy="20" r="18.500" fill="url(#orb)" stroke="#71879a"/><path d="M12 12q4-3 8 0l-2 7q-4-3-8 0z" fill="#ec6937"/><path d="M21 13q5 2 9-1l-2 8q-4 2-9 0z" fill="#8ec73c"/><path d="M10 21q4-3 8 0l-2 7q-4-3-8 0z" fill="#4b9cdb"/><path d="M18 22q5 2 9 0l-2 7q-4 3-9 0z" fill="#ffd13b"/></svg></button>
  <button class="task" aria-label="浏览器"><svg width="34" height="34" viewBox="0 0 34 34"><path d="M17 17C10 14 12 3 20 1q5 0 8 4-8 2-11 12z" fill="#f63e94"/><path d="M17 17c4-7 13-7 16-2q1 7-3 11-3-7-13-9z" fill="#fe4837"/><path d="M17 17c9-1 12 7 8 12q-6 5-12 4 5-6 4-16z" fill="#ffd02f"/><path d="M17 17c1 8-5 13-11 10Q1 23 1 17q8 4 16 0z" fill="#3bd33f"/><path d="M17 17C8 19 1 14 4 7q4-5 10-6-3 8 3 16z" fill="#8d6cff"/><path d="M17 17C12 9 15 3 20 1h4q-7 6-7 16z" fill="#d84cf0"/><circle cx="17" cy="17" r="3" fill="#fff"/></svg></button>
  <button class="task" aria-label="WPS 表格"><svg width="30" height="32" viewBox="0 0 30 32"><rect x="1" y="2" width="28" height="28" rx="3" fill="#2388f5"/><path d="M6 10l5 12 5-12 4 12 5-12M11 10h14" fill="none" stroke="#fff" stroke-width="2.300"/><path d="M19 20h9v11h-9z" fill="#36b855"/><path d="M26 22h-4q-2 3 1 3t2 4h-4" fill="none" stroke="#fff"/></svg></button>
  <button class="task active" aria-label="广联达 GTJ"><svg width="34" height="34" viewBox="0 0 34 34"><rect x="1" y="1" width="32" height="32" rx="6" fill="#2995ee"/><path d="M1 10h32M1 23h32M10 1v32M24 1v32" stroke="#65bbf7" stroke-width=".7"/><path d="M7 7q10 3 20-1v6q-3 2-7 2l1 15q-4 2-7 0l1-15q-5 0-8-2z" fill="#fff"/></svg></button>
  <button class="task" aria-label="CAD 快速看图"><svg width="34" height="34" viewBox="0 0 34 34"><rect x="1" y="1" width="32" height="32" rx="4" fill="#0964b3" stroke="#9eaab2" stroke-width="2.500"/><path d="M4 9h26M4 25h26M9 4v26M25 4v26" stroke="#2d8ede" stroke-width=".7"/><path d="M12 13H6v11h6M13 25l4-15 4 15M14 20h6M23 13v11h3l3-3v-5l-3-3zM17 6v5" fill="none" stroke="#fff" stroke-width="1.800"/></svg></button>
  <button class="task" aria-label="网易云音乐"><svg width="34" height="34" viewBox="0 0 34 34"><rect x="1" y="1" width="32" height="32" rx="6" fill="#df1420"/><path d="M22 6.500q-5-1.500-5.500 2.500l2.500 11q0 4-3 4-4-1-3-5 1-4 6-4.500 7 .5 7 7-1 7-9 7.500-9-1-9.500-9 0-7 6-9.500" fill="none" stroke="#fff" stroke-width="2.500" stroke-linecap="round"/></svg></button>
  <div class="tray">
    <svg width="17" height="18" viewBox="0 0 17 18"><path d="M3 2l12-1 1 14-12 2Q0 15 1 6z" fill="#f2511b"/><path d="M13 5q-7-2-7 1 0 2 3 2 4 0 3 3-2 3-8 1" fill="none" stroke="#fff" stroke-width="2"/></svg>
    <svg class="help-tray" width="17" height="17" viewBox="0 0 17 17"><circle cx="8.500" cy="8.500" r="7.500" fill="#1836a8" stroke="#b9c9ea"/><path d="M6 6.500q0-2.500 2.500-2.500T11 6.500q0 1-2.500 2.500v1.500M8.500 12v2" fill="none" stroke="#fff" stroke-width="1.500"/></svg>
    <svg class="lang" width="12" height="22" viewBox="0 0 12 22" fill="none" stroke="#fff"><path d="M4.500 3V1.500h5v4H8M2.500 3.500h5v4h-5z"/><path d="M3 14h6l-3 3z" fill="#fff" stroke="none"/></svg>
    <span class="cpu">CPU温度: 74℃</span>
    <div class="tray-icons">
      <svg width="16" height="16" viewBox="0 0 16 16"><circle cx="8" cy="8" r="7.500" fill="#47b6a0"/><circle cx="8" cy="8" r="4" fill="none" stroke="#fff" stroke-width="2"/><path d="M7 5l3 3" stroke="#fff"/></svg>
      <svg width="16" height="16" viewBox="0 0 16 16"><circle cx="8" cy="8" r="7.500" fill="#1757ba"/><path d="M8 2l2 2h3v3l1 1-2 3v2h-3l-1 1-2-1H3v-3L2 8l1-2V4h3z" fill="#fff"/><circle cx="8" cy="8" r="2.500" fill="#1757ba"/></svg>
      <svg width="16" height="16" viewBox="0 0 34 34"><rect width="34" height="34" rx="5" fill="#df1420"/><path d="M22 6.500q-5-1.500-5.500 2.500l2.500 11q0 4-3 4-4-1-3-5 1-4 6-4.500 7 .5 7 7-1 7-9 7.500-9-1-9.500-9 0-7 6-9.500" fill="none" stroke="#fff" stroke-width="3"/></svg>
      <svg width="16" height="18" viewBox="0 0 16 18"><path d="M4 7q0-6 4-6t4 6l3 6h-3l-1 3H5l-1-3H1z" fill="#080808"/><ellipse cx="8" cy="12" rx="3" ry="4" fill="#fff"/><path d="M3 8h10v3H3zM11 1l4-1v4z" fill="#ff36b1"/><path d="M6 4h1v2H6zM9 4h1v2H9z" fill="#fff"/><path d="M4 16h3v2H3zM9 16h4v2H9zM6 6h4v1H6z" fill="#ffc025"/></svg>
      <svg width="16" height="16" viewBox="0 0 16 16"><circle cx="8" cy="8" r="7.500" fill="#3998f7"/><path d="M3 3q4 4 10 3-1 3-4 3l1 2-4 3 1-4Q3 9 3 3z" fill="#fff"/></svg>
      <svg width="16" height="16" viewBox="0 0 16 16"><circle cx="8" cy="8" r="7.500" fill="#117fd0"/><path d="M12 3Q5 1 3 8q1 7 8 4l2-5H8" fill="none" stroke="#b6edff" stroke-width="2"/></svg>
      <svg width="16" height="16" viewBox="0 0 16 16"><ellipse cx="8" cy="8" rx="5" ry="7.500" fill="#123f86"/><path d="M4.500 5l7 6L8 14V2l3.500 3-7 6" fill="none" stroke="#f4faff" stroke-width="1.300"/></svg>
      <svg width="16" height="16" viewBox="0 0 16 16" fill="none" stroke="#fff"><path d="M2.500 2.500h6v12h-6zM4 1h3M4 5.500h3M4 8.500h3M4 11.500h3M10 5h5v4h-4M11 2v3M14 2v3M12 9v4H9"/></svg>
      <svg width="16" height="16" viewBox="0 0 16 16" fill="none" stroke="#fff"><path d="M1 6h3l4-4v12l-4-4H1z" fill="#ddd"/><path d="M10 5q2 3 0 6M12 3q3.500 5 0 10"/></svg>
      <svg width="16" height="16" viewBox="0 0 16 16" fill="#fff"><path d="M1 12h2v2H1zM4 10h2v4H4zM7 7h2v7H7zM10 4h2v10h-2zM13 2h2v12h-2z"/></svg>
    </div>
    <time class="clock">12:35<br>2020/6/12</time>
    <button class="show-desktop" aria-label="显示桌面"></button>
  </div>
</div>

</div>
</body>
</html>
```

FILE: styles.css
```css
* { box-sizing: border-box; }

body {
  margin: 0;
  color: #111;
  font: 12px/16px "Open Sans", "Noto Sans CJK SC", sans-serif;
  overflow: hidden;
}

button, input, select {
  margin: 0;
  padding: 0;
  border: 0;
  background: none;
  color: inherit;
  font: inherit;
}

button {
  display: inline-flex;
  align-items: center;
  white-space: nowrap;
}

svg { display: block; flex: none; }
ul { margin: 0; padding: 0; list-style: none; }
h1, h2 { margin: 0; font-size: 12px; font-weight: 400; }

.app {
  display: grid;
  grid-template-rows: auto auto auto minmax(0, 1fr) auto auto;
  height: 100vh;
  background: #fff;
}

.caret {
  flex: none;
  border: 3px solid transparent;
  border-top-color: #555;
  border-bottom-width: 0;
}

/* title bar and tabs */
.top { display: flex; }
.logo {
  width: 46px;
  padding: 6px 0 0 8px;
  align-items: flex-start;
}
.top-rows { flex: 1; min-width: 0; }
.titlebar { display: flex; align-items: center; height: 22px; }
.quick { display: flex; align-items: center; padding-left: 8px; }
.quick button { width: 23px; }
.quick .with-caret { width: 32px; gap: 3px; }
.quick .tiny { width: 8px; }
.quick .tiny .caret { border-width: 2px; border-bottom-width: 0; }
.quick .pale .caret { border-top-color: #bbb; }
.titlebar h1 { flex: 1; min-width: 0; white-space: nowrap; overflow: hidden; }
.path { font-size: 13px; }
.window-buttons { display: flex; gap: 25px; padding-right: 15px; }

.tabrow {
  display: flex;
  justify-content: space-between;
  height: 19px;
  border-bottom: 1px solid #d1d5da;
}
.tabs { display: flex; padding-left: 4px; }
.tabs button { padding: 0 13px; color: #333; }
.tabs .active { background: #55a2f2; color: #fff; }
.account { display: flex; align-items: center; gap: 9px; padding-right: 6px; }
.help-search {
  display: flex;
  align-items: center;
  width: 245px;
  height: 17px;
  padding: 0 6px 0 2px;
  border: 1px solid #c6c6c6;
}
.help-search input { flex: 1; min-width: 0; outline: 0; }
.help-search input::placeholder { color: #bbb; }
.user { display: flex; align-items: center; gap: 3px; margin-right: 3px; color: #111; text-decoration: none; }
.question { color: #888; font-size: 14px; font-weight: 600; gap: 1px; }
.question .caret { border-top-color: #999; }

/* ribbon */
.ribbon {
  display: flex;
  height: 98px;
  border-bottom: 2px solid #92969b;
  background: linear-gradient(#fff 50%, #e7ecee);
}
.group {
  display: flex;
  flex-direction: column;
  flex: none;
  margin: 3px 0 2px;
  padding-left: 6px;
  border-right: 1px solid #cdd1d4;
}
.g-select { width: 146px; }
.g-cad { width: 194px; }
.g-common { width: 276px; }
.g-modify { width: 237px; }
.g-draw { width: 119px; padding-left: 5px; }
.g-second { width: 102px; padding-left: 5px; }
.group-body { display: flex; gap: 5px; height: 69px; }
.g-select .group-body { gap: 0; }
.g-draw .group-body { gap: 0; }
.col { display: flex; flex-direction: column; }
.col button { height: 23px; padding: 0 3px; gap: 3px; }
.col .caret { margin-left: 3px; }
.col button:disabled { color: #aaa; }
.col button:disabled .caret { border-top-color: #bbb; }
.big { flex-direction: column; width: 42px; padding-top: 4px; gap: 5px; }
.g-select .big { width: 44px; }
.g-second .big { width: 52px; }
.icon-only button { padding: 0 2px; }
.group-label {
  justify-content: center;
  margin: 5px 0 0 -6px;
  gap: 6px;
  color: #222;
}
.group-label .caret { border-width: 4px; border-bottom-width: 0; }
div.group-label { padding: 2px 0 0 4px; text-align: center; }

/* element selectors */
.context-bar {
  display: flex;
  height: 27px;
  padding: 2px 2px 2px 1px;
  border-bottom: 1px solid #8c9097;
  background: #c9ccd0;
}
.context-bar select {
  width: 100px;
  padding: 0 16px 0 4px;
  border: 1px solid #a9abb0;
  appearance: none;
  background: #fff url("data:image/svg+xml,%3Csvg xmlns='http://www.w3.org/2000/svg' width='5' height='3'%3E%3Cpath d='M0 0h5L2.500 3z' fill='%23444'/%3E%3C/svg%3E") no-repeat right 4px center;
}

/* workspace */
.workspace {
  display: grid;
  grid-template-columns: 210px 284px 4px minmax(0, 1fr);
  min-height: 0;
}
.panel {
  display: flex;
  flex-direction: column;
  min-height: 0;
  border: 1px solid #bbbdc2;
  border-top: 0;
  background: #fff;
}
.panel-grip {
  display: flex;
  justify-content: flex-end;
  flex: none;
  height: 12px;
  padding-right: 4px;
  background: #d4d5da;
}
.panel-grip button { color: #555; font-size: 14px; line-height: 12px; }
.nav h2 {
  height: 22px;
  padding: 2px 7px;
  border: solid #c7c9ce;
  border-width: 1px 0;
  background: #eee;
  color: #777;
}
.nav-tools {
  display: flex;
  align-items: center;
  height: 28px;
  padding: 0 1px 0 7px;
  gap: 4px;
  border-bottom: 1px solid #c7c9ce;
  background: #eee;
}
.expand { margin-right: auto; }
.toggle {
  justify-content: center;
  width: 24px;
  height: 22px;
  border: 1px solid #55a2f2;
  border-radius: 3px;
  background: #e9f3fe;
}
.nav-tree { position: relative; flex: 1; min-height: 0; padding-top: 3px; overflow: hidden; }
.nav-tree li { display: flex; align-items: center; height: 24px; }
.folder { padding-left: 3px; gap: 4px; }
.leaf { height: 21px; width: 110px; margin-left: 40px; padding-left: 3px; gap: 6px; }
.leaf.selected { background: #c9daf0; }
.scroll-thumb { width: 8px; border-radius: 4px; background: #ccc; }
.nav-tree .scroll-thumb { position: absolute; top: 172px; right: 3px; height: 185px; }

.middle {
  display: grid;
  grid-template-rows: minmax(0, 1fr) 130px;
  gap: 5px;
  min-height: 0;
  padding-left: 4px;
}
.panel-tabs {
  display: flex;
  height: 22px;
  flex: none;
  border: solid #c7c9ce;
  border-width: 1px 0;
  background: #eee;
}
.panel-tabs button { padding: 0 8px; border-right: 1px solid #c7c9ce; background: #ddd; color: #777; }
.panel-tabs .active { background: #eee; color: #222; font-weight: 600; }
.component-tools {
  display: flex;
  align-items: center;
  height: 28px;
  padding: 0 3px 0 6px;
  gap: 9px;
  border-bottom: 1px solid #c7c9ce;
  background: #eee;
  color: #333;
}
.component-tools button { gap: 3px; }
.component-tools .caret { margin-left: 3px; }
.component-tools .more { margin-left: auto; }
.component-search {
  display: flex;
  align-items: center;
  height: 20px;
  padding: 0 7px 0 2px;
  border-bottom: 1px solid #c7c9ce;
}
.component-search input { flex: 1; min-width: 0; outline: 0; }
.component-search input::placeholder { color: #888; }
.component-tree { flex: 1; padding-top: 3px; }
.component-tree .root { height: 24px; padding-left: 10px; gap: 6px; }
.component-tree li { display: flex; align-items: center; height: 24px; padding-left: 40px; }
.component-tree li button { width: 151px; height: 21px; padding-left: 3px; }
.component-tree .selected { background: #b1cbec; }

.table-area { display: flex; min-height: 0; overflow: hidden; }
.table-area table { flex: 1; table-layout: fixed; border-collapse: collapse; }
.c-num { width: 22px; }
.c-name { width: 101px; }
.c-value { width: 99px; }
.c-extra { width: 41px; }
.table-area th, .table-area td {
  height: 21px;
  padding: 0 3px;
  border: solid #d0d0d0;
  border-width: 0 1px 1px 0;
  line-height: 16px;
  text-align: left;
  white-space: nowrap;
}
.table-area th { background: #eee; color: #333; font-weight: 400; text-align: center; }
.table-area thead th { height: 22px; }
.table-area th.current { background: #7fb9f8; color: #fff; font-weight: 600; }
.table-area .link { color: #155cf0; }
.table-area .editing { border: 2px solid #777; }
.table-area .check { text-align: center; }
.check input {
  width: 14px;
  height: 14px;
  border: 1px solid #777;
  border-radius: 3px;
  appearance: none;
  background: #fff;
  vertical-align: middle;
}
.check input:checked {
  border-color: #55a2f2;
  background: #55a2f2 url("data:image/svg+xml,%3Csvg xmlns='http://www.w3.org/2000/svg' width='12' height='12'%3E%3Cpath d='M2 6l3 3 5-6' fill='none' stroke='white' stroke-width='2'/%3E%3C/svg%3E") center no-repeat;
}
.scroll-gutter { flex: none; padding: 15px 3px 0 4px; }
.scroll-gutter .scroll-thumb { height: 18px; }

.splitter { display: flex; align-items: center; background: #fff; }
.splitter button { height: 100px; background: #626b77; }

/* drawing area */
.canvas { position: relative; min-width: 0; overflow: hidden; background: #000; }
.drawing { width: 100%; height: 100%; }
.axis-label { fill: #fff; font: 17px "Open Sans", sans-serif; }
.view-tools {
  position: absolute;
  top: 0;
  right: 0;
  display: flex;
  flex-direction: column;
  align-items: center;
  width: 33px;
  padding: 7px 4px 9px 3px;
  border: 1px solid #adb0b5;
  border-radius: 2px;
  background: #95989d;
}
.view-tools button { padding: 2px 0; }
.view-tools .caret { margin: 3px 0; border-width: 4px 4px 0; border-top-color: #29323d; }
.view-tools hr { width: 23px; margin: 2px 0 1px; border: 0; border-top: 1px solid #606468; }
.cube-label { fill: #1c2a3a; stroke: none; font: 10px "Liberation Sans", sans-serif; }
.bubble {
  position: absolute;
  top: 53px;
  right: -32px;
  width: 42px;
  height: 42px;
  border-radius: 50%;
  background: #b9eae8;
}

/* status bar */
.status {
  display: flex;
  align-items: center;
  height: 30px;
  padding: 0 12px 0 2px;
  background: #dedee0;
  color: #333;
  white-space: nowrap;
}
.coords { width: 263px; }
.floor { width: 82px; }
.level { width: 134px; }
.zero { width: 103px; }
.status-right { display: flex; align-items: center; gap: 5px; margin-left: auto; }
.status-right button {
  height: 24px;
  padding: 0 3px;
  gap: 4px;
  border: 1px solid #999;
  background: #d0d0d1;
}
.status-right .text { padding: 0 5px; }
.status-right .on { border-color: #2b8de9; background: #fff; }
.hint { margin-left: 2px; }
.fps { margin-left: 20px; }

/* taskbar */
.taskbar {
  display: flex;
  align-items: center;
  height: 40px;
  border-top: 2px solid #505c6c;
  background: linear-gradient(90deg, #111722, #19212d 25%, #253347 45%, #1e2b3e 60%, #111820 80%, #1a2532);
  color: #fff;
}
.start { margin: 0 12px 0 6px; }
.task {
  justify-content: center;
  width: 58px;
  height: 38px;
  margin-right: 4px;
  border: 1px solid #98a0ab;
  border-radius: 3px;
  background: linear-gradient(135deg, #767d87, #2c3440 55%, #535a63);
}
.task.active { background: linear-gradient(135deg, #eef1f4, #a0a9b4 60%, #cbd0d5); }
.tray { display: flex; align-items: center; height: 100%; margin-left: auto; }
.help-tray { margin-left: 6px; }
.lang { margin-left: 6px; }
.cpu { margin: 0 24px 0 26px; }
.tray-icons { display: flex; align-items: center; gap: 8px; }
.clock { margin: 0 10px 0 18px; line-height: 18px; text-align: center; }
.show-desktop {
  width: 13px;
  height: 38px;
  border: 1px solid #6c7682;
  background: linear-gradient(135deg, #3c4655, #10161f);
}
```
